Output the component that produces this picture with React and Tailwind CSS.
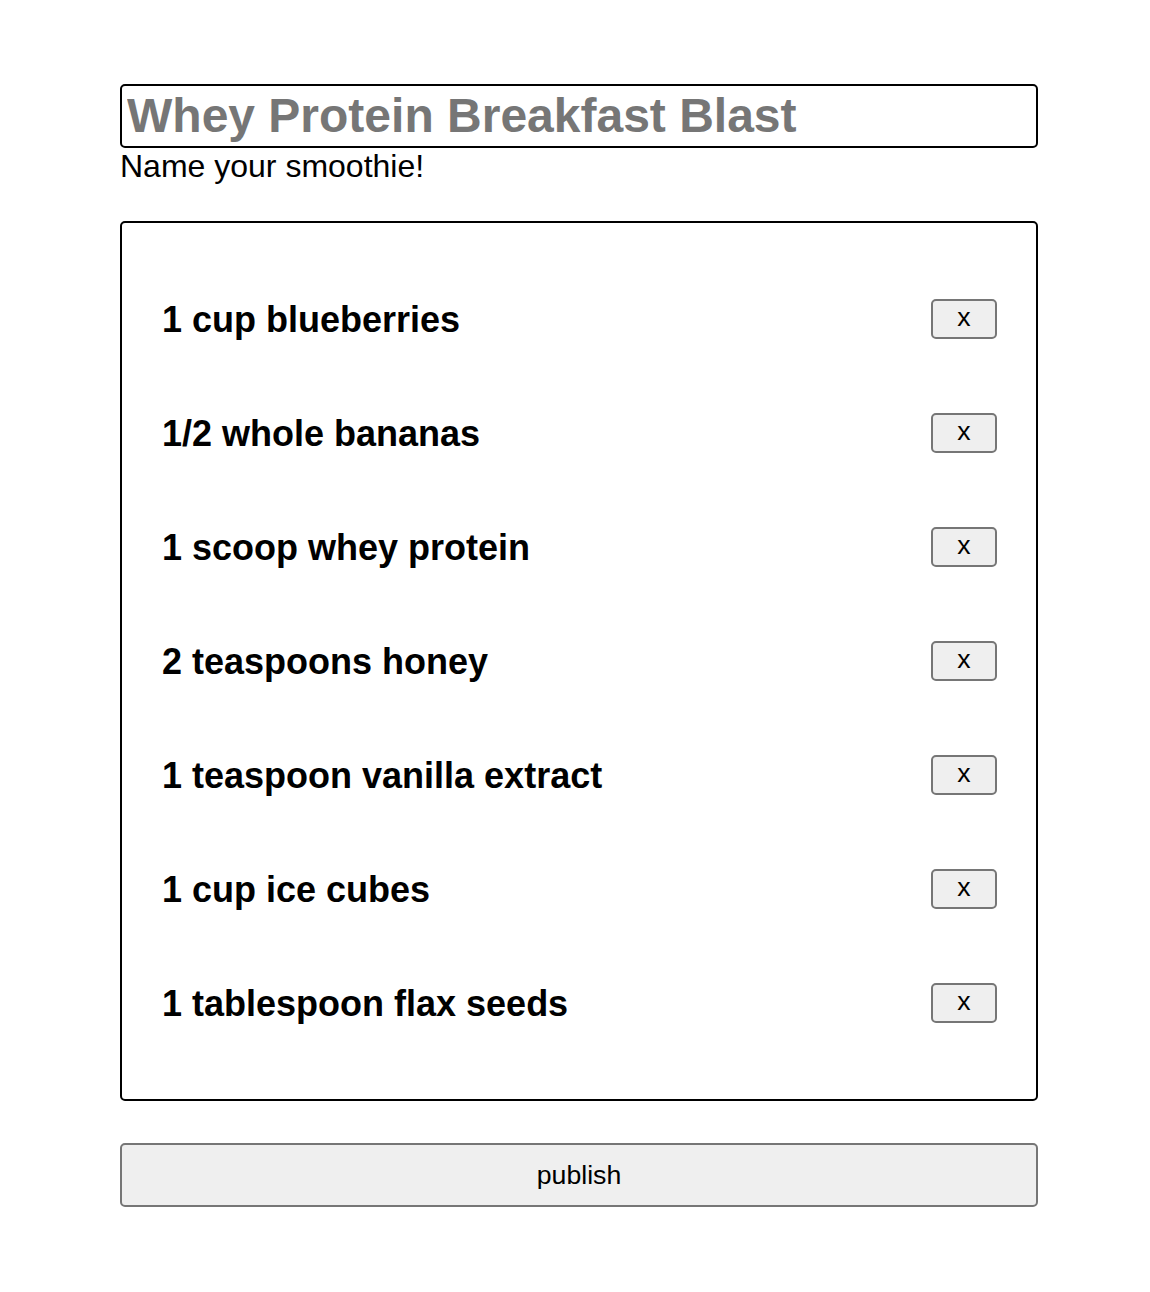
import { useState } from "react";

const startItems = [
  "1 cup blueberries",
  "1/2 whole bananas",
  "1 scoop whey protein",
  "2 teaspoons honey",
  "1 teaspoon vanilla extract",
  "1 cup ice cubes",
  "1 tablespoon flax seeds",
];

export default function App() {
  const [name, setName] = useState("Whey Protein Breakfast Blast");
  const [items, setItems] = useState(startItems);

  function removeItem(idx) {
    setItems(items.filter((_, i) => i !== idx));
  }

  return (
    <div className="min-h-[1292px] bg-white font-['Liberation_Sans',Arial,sans-serif] text-black">
      <div className="ml-[120px] w-[918px] pt-[84px]">
        <input
          className="block h-[64px] w-full rounded-[5px] border-2 border-black px-[5px] text-[48px] font-bold text-[#767676] outline-none"
          value={name}
          onChange={(e) => setName(e.target.value)}
        />
        <div className="text-[32px] leading-[36px]">Name your smoothie!</div>

        <div className="mt-[37px] rounded-[5px] border-2 border-black pl-[40px] pr-[39px] pt-[40px] pb-[38px]">
          {items.map((item, idx) => (
            <div key={item} className="flex h-[114px] items-center justify-between">
              <span className="text-[36px] font-bold">{item}</span>
              <button
                className="mb-[3px] flex h-[40px] w-[66px] items-center justify-center rounded-[5px] border-2 border-[#767676] bg-[#efefef] pb-[3px] text-[26.67px]"
                onClick={() => removeItem(idx)}
              >
                x
              </button>
            </div>
          ))}
        </div>

        <button className="mt-[42px] block h-[64px] w-full rounded-[5px] border-2 border-[#767676] bg-[#efefef] text-[26.67px]">
          publish
        </button>
      </div>
    </div>
  );
}
